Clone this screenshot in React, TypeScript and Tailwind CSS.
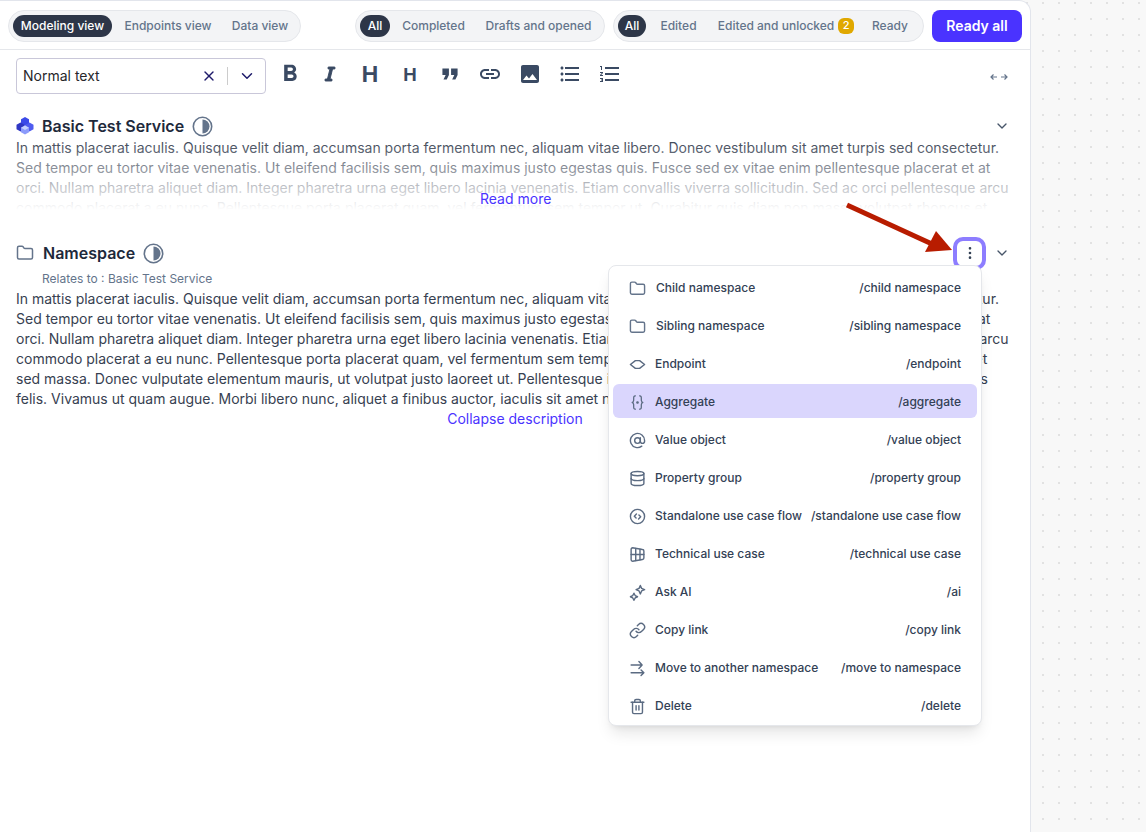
import {
  AtSign,
  ChevronDown,
  Database,
  Folder,
  Link,
  MoreVertical,
  Trash2,
  X,
} from 'lucide-react';
import { FaItalic } from 'react-icons/fa';
import {
  MdFormatBold,
  MdFormatListBulleted,
  MdFormatListNumbered,
  MdFormatQuote,
  MdImage,
  MdLink,
} from 'react-icons/md';
import type { ReactNode } from 'react';

const lead = 'In mattis placerat iaculis. Quisque velit diam, accumsan porta fermentum nec, aliquam vitae libero. Donec vestibulum sit amet turpis sed consectetur. Sed tempor eu tortor vitae venenatis. Ut eleifend facilisis sem, quis maximus justo egestas quis. Fusce sed ex vitae enim pellentesque placerat et at orci. Nullam pharetra aliquet diam. Integer pharetra urna eget libero lacinia venenatis. Etiam convallis viverra sollicitudin. Sed ac orci pellentesque arcu commodo placerat a eu nunc. Pellentesque porta placerat quam, vel fermentum sem tempor ut. Curabitur quis diam non massa volutpat rhoncus et';
const rest = 'sed massa. Donec vulputate elementum mauris, ut volutpat justo laoreet ut. Pellentesque inhabitant tristique senectus et netus et malesuada fames felis. Vivamus ut quam augue. Morbi libero nunc, aliquet a finibus auctor, iaculis sit amet nunc.';

function Half() {
  return (
    <svg width="21" height="21" viewBox="0 0 21 21" fill="none">
      <circle cx="10.5" cy="10.5" r="9.2" stroke="#64748b" strokeWidth="1.6" />
      <path d="M10.5 3.500a7 7 0 0 1 0 14z" fill="#64748b" />
    </svg>
  );
}

function Pill({ items }: { items: { label: string; active?: boolean; badge?: string; w: string }[] }) {
  return (
    <div className="flex h-8 items-center rounded-full border border-[#e5e7eb] bg-[#f3f4f6] px-1">
      {items.map((i) => (
        <div
          key={i.label}
          className={`flex h-[22px] items-center justify-center rounded-full text-xs font-medium whitespace-nowrap ${i.w} ${i.active ? 'bg-[#2d3648] text-white' : 'text-[#64748b]'}`}
        >
          {i.label}
          {i.badge && (
            <span className="ml-1 flex h-4 w-4 items-center justify-center rounded-md bg-[#e0a800] text-[11px] text-white">
              {i.badge}
            </span>
          )}
        </div>
      ))}
    </div>
  );
}

function Tool({ children }: { children: ReactNode }) {
  return <div className="flex h-6 w-10 items-center justify-center text-[#3a4a63]">{children}</div>;
}

const ic = { width: 17, height: 17, viewBox: '0 0 24 24', fill: 'none', stroke: '#5b6b82', strokeWidth: 2, strokeLinecap: 'round' as const, strokeLinejoin: 'round' as const };

const menu: { icon: ReactNode; label: string; cmd: string; on?: boolean; nudge?: boolean }[] = [
  { icon: <Folder size={17} color="#64748b" />, label: 'Child namespace', cmd: '/child namespace', nudge: true },
  { icon: <Folder size={17} color="#64748b" />, label: 'Sibling namespace', cmd: '/sibling namespace', nudge: true },
  { icon: <svg {...ic}><path d="M2 12l7-5.500h6l7 5.500-7 5.500H9z" /></svg>, label: 'Endpoint', cmd: '/endpoint' },
  { icon: <svg {...ic} strokeWidth={1.8}><path d="M9 2.500c-3.500 0-2 4.500-2.500 7C6.200 11 5.500 12 4.500 12c1 0 1.700 1 2 2.500.5 2.500-1 7 2.500 7M15 2.500c3.500 0 2 4.500 2.500 7 .3 1.500 1 2.500 2 2.500-1 0-1.700 1-2 2.500-.5 2.500 1 7-2.500 7" /><circle cx="12" cy="12" r="1" fill="#5b6b82" /></svg>, label: 'Aggregate', cmd: '/aggregate', on: true },
  { icon: <AtSign size={17} color="#5b6b82" />, label: 'Value object', cmd: '/value object' },
  { icon: <Database size={17} color="#5b6b82" />, label: 'Property group', cmd: '/property group' },
  { icon: <svg {...ic}><circle cx="12" cy="12" r="10" /><path d="M10.500 8.500L7.500 11.500 10 14M13.500 15.500L16.500 12.500 14 10" /></svg>, label: 'Standalone use case flow', cmd: '/standalone use case flow' },
  { icon: <svg {...ic}><path d="M5 2.500l14 2.500a2 2 0 0 1 2 2v10a2 2 0 0 1-2 2L5 21.500a2 2 0 0 1-2-2v-15a2 2 0 0 1 2-2z" /><path d="M3 12h18M9.500 3.500v17M15.500 4.500v15" /></svg>, label: 'Technical use case', cmd: '/technical use case' },
  { icon: <svg {...ic}><path d="M16 2l1.800 4.200L22 8l-4.200 1.800L16 14l-1.800-4.200L10 8l4.200-1.800zM7 13l1.700 3.300L12 18l-3.300 1.700L7 23l-1.700-3.300L2 18l3.300-1.700z" /></svg>, label: 'Ask AI', cmd: '/ai' },
  { icon: <Link size={17} color="#5b6b82" />, label: 'Copy link', cmd: '/copy link' },
  { icon: <svg {...ic}><path d="M3 8h15M14 3l4.500 5-4.500 5" transform="translate(0 -1)" /><path d="M3 18h18M17 14l4 4-4 4" /></svg>, label: 'Move to another namespace', cmd: '/move to namespace' },
  { icon: <Trash2 size={17} color="#5b6b82" />, label: 'Delete', cmd: '/delete' },
];

export default function App() {
  return (
    <div className="relative flex h-[832px] w-[1146px] overflow-hidden bg-[#f8f8f8] bg-[radial-gradient(#e2e2e2_1px,transparent_1.2px)] bg-[length:16px_16px] bg-[position:11px_11px] font-['Inter',sans-serif]">
      <main className="h-full w-[1031px] rounded-tr-xl border-t border-r border-[#e2e5ec] bg-white">
        {/* Top bar */}
        <div className="flex h-[49px] items-center justify-between border-b border-[#e5e7eb] pt-px pr-2 pl-2">
          <Pill items={[
            { label: 'Modeling view', active: true, w: 'w-[99px]' },
            { label: 'Endpoints view', w: 'w-[112px]' },
            { label: 'Data view', w: 'w-[72px]' },
          ]} />
          <div className="flex items-center gap-2">
            <Pill items={[
              { label: 'All', active: true, w: 'w-[30px]' },
              { label: 'Completed', w: 'w-[87px]' },
              { label: 'Drafts and opened', w: 'w-[123px]' },
            ]} />
            <Pill items={[
              { label: 'All', active: true, w: 'w-[28px]' },
              { label: 'Edited', w: 'w-[65px]' },
              { label: 'Edited and unlocked', badge: '2', w: 'w-[150px]' },
              { label: 'Ready', w: 'w-[58px]' },
            ]} />
            <button className="h-8 w-[90px] rounded-lg bg-[#4a33ff] text-sm font-semibold text-white">Ready all</button>
          </div>
        </div>

        {/* Toolbar */}
        <div className="flex h-[64px] items-start pt-[8px] pr-[22px] pl-4">
          <div className="flex h-9 w-[250px] items-center rounded border border-[#c9c7d9] pl-1.5 text-sm text-[#27272a]">
            <span className="flex-1">Normal text</span>
            <X size={16} color="#1e1b6b" />
            <span className="mx-[10px] h-[18px] w-px bg-[#cccccc]" />
            <ChevronDown size={18} color="#1e1b6b" className="mr-[9px]" />
          </div>
          <div className="mt-1 ml-1 flex items-center">
            <Tool><MdFormatBold size={28} /></Tool>
            <Tool><FaItalic size={16} stroke="currentColor" strokeWidth={30} /></Tool>
            <Tool><span className="text-[22px] font-bold">H</span></Tool>
            <Tool><span className="mt-px text-[18px] font-bold">H</span></Tool>
            <Tool><MdFormatQuote size={26} /></Tool>
            <Tool><MdLink size={24} /></Tool>
            <Tool><MdImage size={24} /></Tool>
            <Tool><MdFormatListBulleted size={24} /></Tool>
            <Tool><MdFormatListNumbered size={24} /></Tool>
          </div>
          <div className="mt-[14px] ml-auto text-[#64748b]">
            <svg width="18" height="10" viewBox="0 0 18 10" fill="none" stroke="currentColor" strokeWidth="1.200"><path d="M7 5H1M3.500 2.500L1 5l2.500 2.500M11 5h6M14.500 2.500L17 5l-2.500 2.500" /></svg>
          </div>
        </div>

        {/* Basic Test Service */}
        <section className="px-4">
          <div className="flex h-[24px] items-center">
            <svg width="18" height="18" viewBox="0 0 18 18" className="mr-2">
              <path d="M9 0l4 2.300v4.400L9 9 5 6.700V2.300z" fill="#3b4ae8" />
              <path d="M4.500 5.500l4 2.300v4.400l-4 2.300-4-2.300V7.800z" fill="#2f37c4" />
              <path d="M13.500 5.500l4 2.300v4.400l-4 2.300-4-2.300V7.800z" fill="#4f5cf0" />
              <path d="M9 8.500l4 2.300v4.400L9 17.500l-4-2.300v-4.400z" fill="#8b9bfb" />
              <path d="M9 8.500l4 2.300-4 2.300-4-2.300z" fill="#c7d2fe" />
            </svg>
            <h2 className="text-base font-semibold text-[#1e293b]">Basic Test Service</h2>
            <span className="ml-2"><Half /></span>
            <ChevronDown size={16} color="#475569" className="mr-1 ml-auto" />
          </div>
          <div className="relative h-[72px] overflow-hidden">
            <p className="text-sm leading-5 text-[#374151]">{lead}</p>
            <div className="absolute inset-0 bg-gradient-to-b from-transparent to-white" />
            <a className="absolute top-[51px] left-[464px] text-sm leading-5 text-[#4a33ff]">Read more</a>
          </div>
        </section>

        {/* Namespace */}
        <section className="px-4 pt-[31px]">
          <div className="flex h-[24px] items-center">
            <Folder size={18} color="#64748b" className="mr-2" />
            <h2 className="ml-px text-base font-semibold text-[#1e293b]">Namespace</h2>
            <span className="ml-2"><Half /></span>
            <div className="ml-auto flex items-center pr-1">
              <div className="flex h-[33px] w-[33px] items-center justify-center rounded-[10px] border-4 border-[#8d7dff] bg-white">
                <MoreVertical size={16} color="#334155" />
              </div>
              <ChevronDown size={16} color="#475569" className="ml-2" />
            </div>
          </div>
          <div className="mt-1 pl-[26px] text-xs leading-5 text-[#64748b]">Relates to : Basic Test Service</div>
          <p className="text-sm leading-5 text-[#374151]">{lead}<br />{rest}</p>
          <div className="text-center text-sm leading-5 text-[#4a33ff]">Collapse description</div>
        </section>
      </main>

      {/* Arrow annotation */}
      <svg className="absolute top-[200px] left-[840px]" width="120" height="60" viewBox="0 0 120 60">
        <path d="M7 5L92 44" stroke="#b81c00" strokeWidth="5" />
        <path d="M96 31L112 50 85 52z" fill="#b81c00" />
      </svg>

      {/* Menu */}
      <div className="absolute top-[265px] left-[608px] flex w-[374px] flex-col rounded-lg border border-[#e5e7eb] bg-white px-1 pt-[2px] pb-px shadow-lg">
        {menu.map((m) => (
          <div key={m.label} className="flex h-[38px] items-center">
            <div className={`flex h-[34px] w-full items-center rounded-md pt-[2px] pr-[16px] pl-[16px] text-xs font-medium text-[#334155] ${m.on ? 'bg-[#dad6fd]' : ''}`}>
              <span className="mr-[9px] flex w-[17px] justify-center">{m.icon}</span>
              <span className={`flex-1 ${m.nudge ? 'pl-px' : ''}`}>{m.label}</span>
              <span>{m.cmd}</span>
            </div>
          </div>
        ))}
      </div>
    </div>
  );
}
